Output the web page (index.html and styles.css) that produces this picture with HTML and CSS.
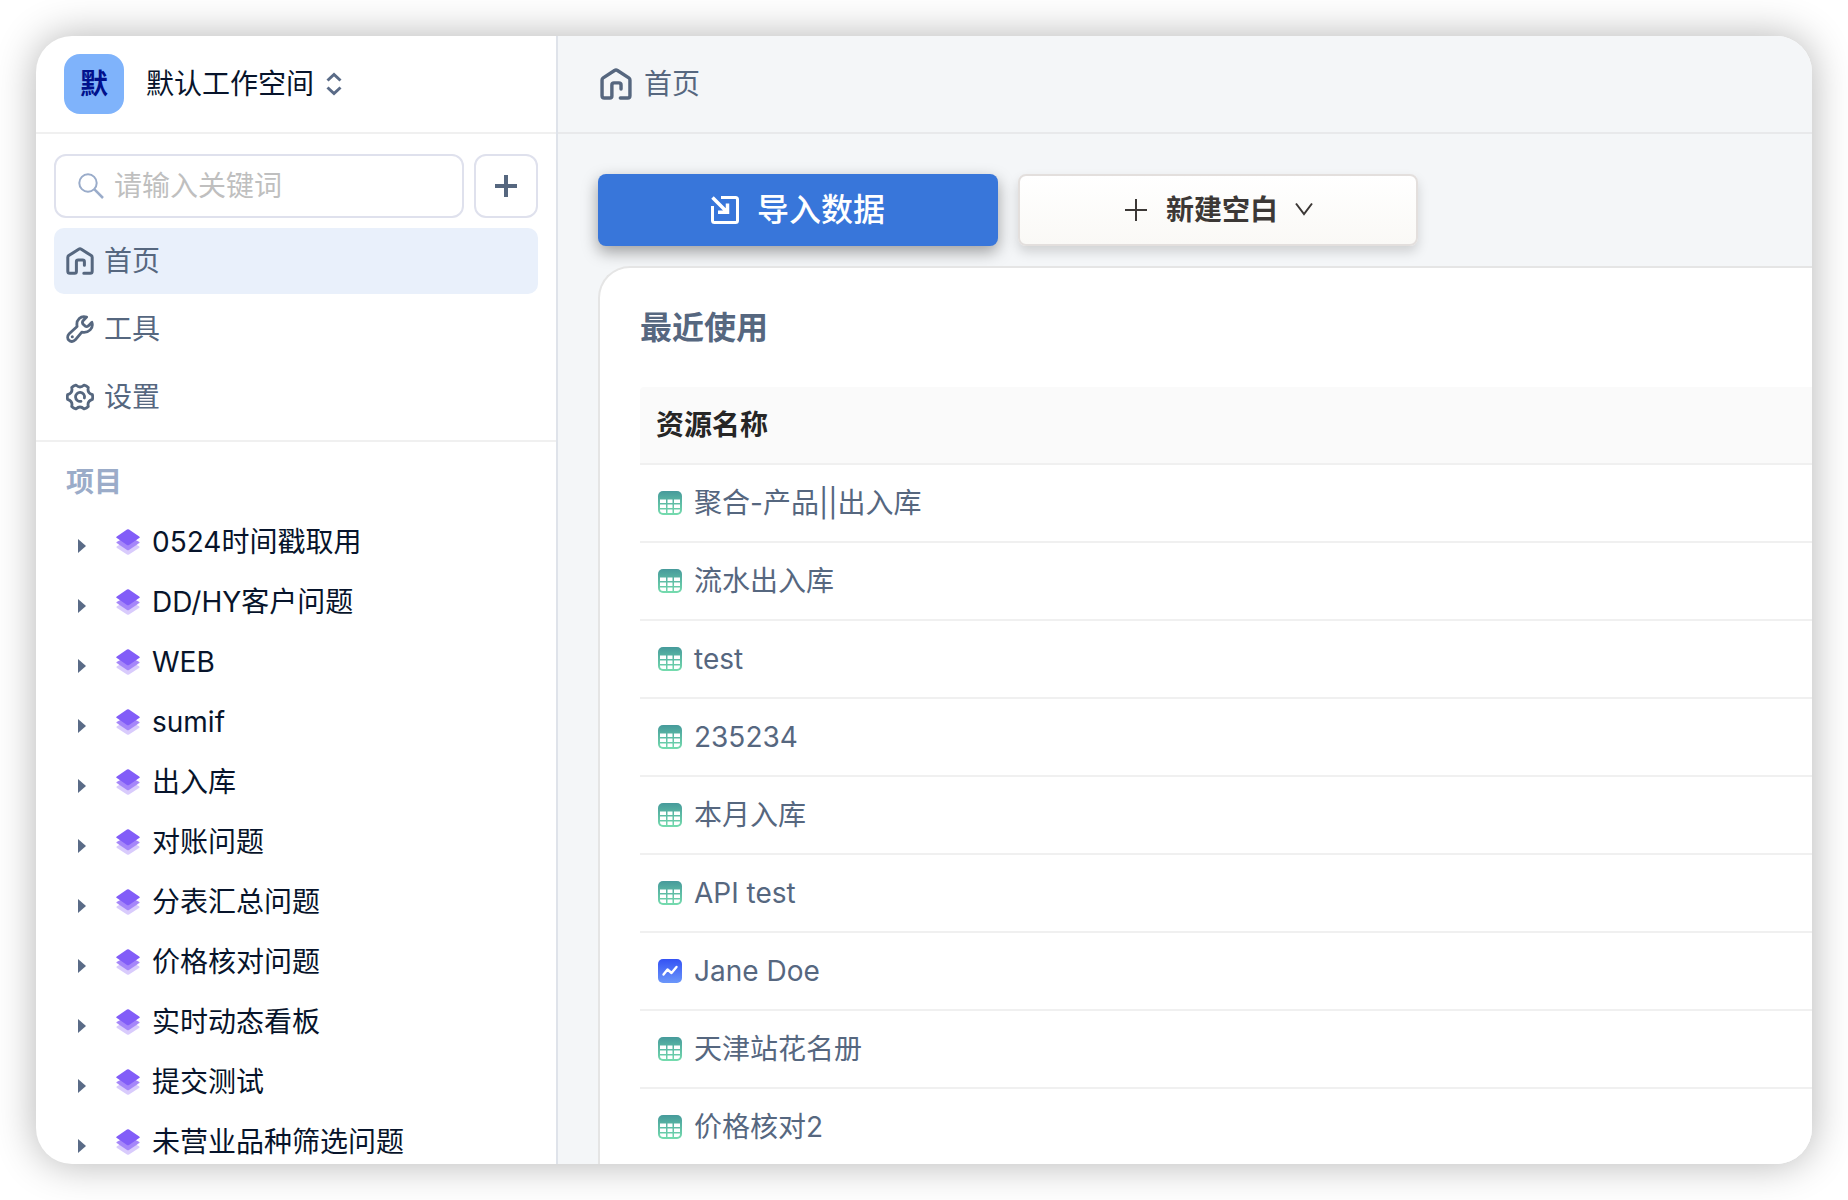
FILE: index.html
```html
<!DOCTYPE html>
<html lang="zh-CN">
<head>
<meta charset="utf-8">
<title>首页</title>
<meta name="viewport" content="width=device-width, initial-scale=1">
<link rel="stylesheet" href="styles.css">
</head>
<body>
<svg class="sprite" aria-hidden="true">
  <defs>
    <linearGradient id="green" x1="0" y1="0" x2="0" y2="1"><stop offset="0" stop-color="#469a9b"/><stop offset="1" stop-color="#75dcae"/></linearGradient>
    <linearGradient id="blue" x1="0" y1="0" x2="0" y2="1"><stop offset="0" stop-color="#3452f4"/><stop offset="1" stop-color="#6b97fa"/></linearGradient>
    <symbol id="home" viewBox="0 0 28 28">
      <path d="M17.8 26.2H24.2Q26.2 26.2 26.2 24.2V10.4Q26.2 9.3 25.2 8.6L15.3 2.2Q14 1.4 12.7 2.2L2.8 8.6Q1.8 9.3 1.8 10.4V24.2Q1.8 26.2 3.8 26.2H8.6Q10.4 26.2 10.4 24.4V14.8Q10.4 13 12.2 13H16.6Q18.4 13 18.4 14.8V18.3" fill="none" stroke="currentColor" stroke-width="3" stroke-linecap="round" stroke-linejoin="round"/>
    </symbol>
    <symbol id="wrench" viewBox="0 0 28 28">
      <path d="M20.6 2.1C15 .2 9.8 4.7 11.1 11.5L3.2 18.8C-1.2 23.6 4.9 29.5 9.3 24.8L15.8 17.1C22.9 18.500 27.7 13 25.9 7.3L22.3 10.9Q20.7 12.1 19.1 11.1L16.9 8.9Q15.9 7.3 17.1 5.7Z" fill="none" stroke="currentColor" stroke-width="2.8" stroke-linejoin="round"/>
      <circle cx="6.300" cy="21.800" r="1.500" fill="currentColor"/>
    </symbol>
    <symbol id="gear" viewBox="0 0 28 28">
      <path d="M26.4 11.6Q27 14 26.4 16.4Q20.9 18.1 22.3 23.500Q20.500 25.300 18.100 25.900Q14 21.900 9.900 25.900Q7.500 25.300 5.700 23.500Q7.100 18.100 1.600 16.400Q1 14 1.600 11.600Q7.100 9.900 5.700 4.500Q7.500 2.700 9.900 2.100Q14 6.100 18.100 2.100Q20.500 2.700 22.300 4.500Q20.900 9.900 26.400 11.600Z" fill="none" stroke="currentColor" stroke-width="2.800" stroke-linejoin="round"/>
      <path d="M15 18.300A4.500 4.500 0 1 1 18.400 15" fill="none" stroke="currentColor" stroke-width="2.800" stroke-linecap="round"/>
    </symbol>
    <symbol id="layers" viewBox="0 0 24 26">
      <path d="M1 17.200L12 11L23 17.200Q24.200 18 23 18.900L13 25.500Q12 26.100 11 25.500L1 18.900Q-.2 18 1 17.200Z" fill="#d9cbfc"/>
      <path d="M1 12.700L12 7L23 12.700Q24.200 13.500 23 14.300L13 20.900Q12 21.500 11 20.900L1 14.300Q-.2 13.500 1 12.700Z" fill="#a586f9"/>
      <path d="M.8 7.500L11 .6Q12 0 13 .6L23.200 7.500Q24.400 8.300 23.200 9.100L13 16Q12 16.600 11 16L.8 9.100Q-.4 8.300 .8 7.500Z" fill="#825df8"/>
    </symbol>
    <symbol id="caret" viewBox="0 0 8 14"><path d="M0 0L8 7L0 14Z" fill="currentColor"/></symbol>
    <symbol id="sheet" viewBox="0 0 24 24">
      <rect width="24" height="24" rx="5" fill="url(#green)"/>
      <path fill="#fff" d="M2 8.500H8V12H2ZM9.500 8.500H14.500V12H9.500ZM16 8.500H22V12H16ZM2 13.500H8V17H2ZM9.500 13.500H14.500V17H9.500ZM16 13.500H22V17H16ZM2 18.500H8V22H5Q2 22 2 19ZM9.500 18.500H14.500V22H9.500ZM16 18.500H22V19Q22 22 19 22H16Z"/>
    </symbol>
    <symbol id="chart" viewBox="0 0 24 24">
      <rect width="24" height="24" rx="5" fill="url(#blue)"/>
      <path d="M5.500 15.500L9.500 10.500L13.500 14L18.500 8" fill="none" stroke="#fff" stroke-width="2.400" stroke-linecap="round" stroke-linejoin="round"/>
    </symbol>
  </defs>
</svg>
<div class="window">
  <aside class="sidebar">
    <header class="bar workspace">
      <span class="avatar">默</span>
      <button class="switcher" type="button">默认工作空间
        <svg width="16" height="24" viewBox="0 0 16 24" fill="none" stroke="#5a6b87" stroke-width="3"><path d="M1.500 8.500L8 2.500L14.500 8.500M1.500 15.500L8 21.500L14.500 15.500"/></svg>
      </button>
    </header>
    <section class="top">
      <div class="search-row">
        <label class="search">
          <svg width="26" height="26" viewBox="0 0 26 26" fill="none" stroke="#9aacca" stroke-width="2"><circle cx="10" cy="10" r="8.700"/><path d="M16.200 16.200L25 25" stroke-width="2.500"/></svg>
          <input type="text" placeholder="请输入关键词" aria-label="请输入关键词">
        </label>
        <button class="add" type="button" aria-label="新建"><svg width="22" height="22" viewBox="0 0 22 22" stroke="currentColor" stroke-width="4"><path d="M11 0V22M0 11H22"/></svg></button>
      </div>
      <nav class="nav">
        <a class="active" href="#home"><svg width="28" height="28"><use href="#home"/></svg>首页</a>
        <a href="#tools"><svg width="28" height="28"><use href="#wrench"/></svg>工具</a>
        <a href="#settings"><svg width="28" height="28"><use href="#gear"/></svg>设置</a>
      </nav>
    </section>
    <section class="projects">
      <h2>项目</h2>
      <ul>
        <li><button type="button" aria-label="展开"><svg width="8" height="14"><use href="#caret"/></svg></button><a href="#p1"><svg width="24" height="26"><use href="#layers"/></svg>0524时间戳取用</a></li>
        <li><button type="button" aria-label="展开"><svg width="8" height="14"><use href="#caret"/></svg></button><a href="#p2"><svg width="24" height="26"><use href="#layers"/></svg>DD/HY客户问题</a></li>
        <li><button type="button" aria-label="展开"><svg width="8" height="14"><use href="#caret"/></svg></button><a href="#p3"><svg width="24" height="26"><use href="#layers"/></svg>WEB</a></li>
        <li><button type="button" aria-label="展开"><svg width="8" height="14"><use href="#caret"/></svg></button><a href="#p4"><svg width="24" height="26"><use href="#layers"/></svg>sumif</a></li>
        <li><button type="button" aria-label="展开"><svg width="8" height="14"><use href="#caret"/></svg></button><a href="#p5"><svg width="24" height="26"><use href="#layers"/></svg>出入库</a></li>
        <li><button type="button" aria-label="展开"><svg width="8" height="14"><use href="#caret"/></svg></button><a href="#p6"><svg width="24" height="26"><use href="#layers"/></svg>对账问题</a></li>
        <li><button type="button" aria-label="展开"><svg width="8" height="14"><use href="#caret"/></svg></button><a href="#p7"><svg width="24" height="26"><use href="#layers"/></svg>分表汇总问题</a></li>
        <li><button type="button" aria-label="展开"><svg width="8" height="14"><use href="#caret"/></svg></button><a href="#p8"><svg width="24" height="26"><use href="#layers"/></svg>价格核对问题</a></li>
        <li><button type="button" aria-label="展开"><svg width="8" height="14"><use href="#caret"/></svg></button><a href="#p9"><svg width="24" height="26"><use href="#layers"/></svg>实时动态看板</a></li>
        <li><button type="button" aria-label="展开"><svg width="8" height="14"><use href="#caret"/></svg></button><a href="#p10"><svg width="24" height="26"><use href="#layers"/></svg>提交测试</a></li>
        <li><button type="button" aria-label="展开"><svg width="8" height="14"><use href="#caret"/></svg></button><a href="#p11"><svg width="24" height="26"><use href="#layers"/></svg>未营业品种筛选问题</a></li>
      </ul>
    </section>
  </aside>
  <main class="main">
    <header class="bar crumb"><svg width="32" height="32"><use href="#home"/></svg>首页</header>
    <div class="content">
      <div class="actions">
        <button class="primary" type="button">
          <svg width="28" height="28" viewBox="0 0 28 28" fill="none" stroke="currentColor" stroke-width="3"><path d="M10 1.500H24.500Q26.500 1.500 26.500 3.500V24.500Q26.500 26.500 24.500 26.500H3.500Q1.500 26.500 1.500 24.500V10"/><path d="M1.500 1.500L16 16M7 16.300H16.500V7.500" stroke-width="3.500"/></svg>
          导入数据
        </button>
        <button class="secondary" type="button">
          <svg width="28" height="28" viewBox="0 0 28 28" stroke="currentColor" stroke-width="2"><path d="M14 3V25M3 14H25"/></svg>
          新建空白
          <svg width="20" height="20" viewBox="0 0 20 20" fill="none" stroke="currentColor" stroke-width="2"><path d="M2 3.500L10 14L18 3.500"/></svg>
        </button>
      </div>
      <section class="card">
        <h1>最近使用</h1>
        <table>
          <thead><tr><th scope="col">资源名称</th></tr></thead>
          <tbody>
            <tr><td><a href="#r1"><svg width="24" height="24"><use href="#sheet"/></svg>聚合-产品||出入库</a></td></tr>
            <tr><td><a href="#r2"><svg width="24" height="24"><use href="#sheet"/></svg>流水出入库</a></td></tr>
            <tr><td><a href="#r3"><svg width="24" height="24"><use href="#sheet"/></svg>test</a></td></tr>
            <tr><td><a href="#r4"><svg width="24" height="24"><use href="#sheet"/></svg>235234</a></td></tr>
            <tr><td><a href="#r5"><svg width="24" height="24"><use href="#sheet"/></svg>本月入库</a></td></tr>
            <tr><td><a href="#r6"><svg width="24" height="24"><use href="#sheet"/></svg>API test</a></td></tr>
            <tr><td><a href="#r7"><svg width="24" height="24"><use href="#chart"/></svg>Jane Doe</a></td></tr>
            <tr><td><a href="#r8"><svg width="24" height="24"><use href="#sheet"/></svg>天津站花名册</a></td></tr>
            <tr><td><a href="#r9"><svg width="24" height="24"><use href="#sheet"/></svg>价格核对2</a></td></tr>
          </tbody>
        </table>
      </section>
    </div>
  </main>
</div>
</body>
</html>
```

FILE: styles.css
```css
* { box-sizing: border-box; }

body {
  margin: 0;
  padding: 36px;
  height: 100vh;
  background: #fff;
  color: #56677f;
  font: 28px/44px Inter, "Noto Sans CJK SC", sans-serif;
}

a { color: inherit; text-decoration: none; }

button {
  font: inherit;
  color: inherit;
  background: none;
  border: 0;
  padding: 0;
  cursor: pointer;
}

svg { display: block; flex: none; }
.sprite { position: absolute; width: 0; height: 0; }

.window {
  display: flex;
  height: 100%;
  border-radius: 36px;
  overflow: hidden;
  background: #fff;
  box-shadow: 0 0 40px rgba(0, 0, 0, .3);
}

/* Sidebar */
.sidebar {
  flex: none;
  width: 522px;
  border-right: 2px solid #dfe3ea;
  overflow: hidden;
}

.bar {
  display: flex;
  align-items: center;
  height: 98px;
  border-bottom: 2px solid #f0f0f0;
}

.workspace { gap: 22px; padding: 0 28px; }

.avatar {
  width: 60px;
  height: 60px;
  border-radius: 16px;
  background: #7fb3fb;
  color: #00108c;
  font-weight: 700;
  line-height: 60px;
  text-align: center;
}

.switcher {
  display: flex;
  align-items: center;
  gap: 12px;
  color: #07142b;
}

.top {
  padding: 20px 18px 10px;
  border-bottom: 2px solid #f0f0f0;
}

.search-row { display: flex; gap: 10px; margin-bottom: 10px; }

.search,
.add {
  display: flex;
  align-items: center;
  height: 64px;
  border: 2px solid #dfe1ed;
  border-radius: 12px;
}

.search { flex: 1; gap: 8px; padding: 0 24px 0 22px; min-width: 0; }

.search input {
  flex: 1;
  min-width: 0;
  height: 44px;
  padding: 0 2px;
  border: 0;
  outline: 0;
  background: none;
  font: inherit;
  color: #07142b;
}

.search input::placeholder { color: #bfbfbf; opacity: 1; }

.add { width: 64px; justify-content: center; }

.nav { display: grid; gap: 2px; }

.nav a {
  display: flex;
  align-items: center;
  gap: 10px;
  height: 66px;
  padding: 0 12px;
  border-radius: 10px;
}

.nav .active { background: #e9f0fb; }

.projects h2 {
  margin: 0;
  padding: 18px 30px 8px;
  font-size: 28px;
  font-weight: 700;
  color: #9bacc9;
}

.projects ul { margin: 0; padding: 0; list-style: none; }

.projects li { display: flex; height: 60px; color: #07142b; }

.projects button {
  display: flex;
  align-items: center;
  justify-content: center;
  width: 20px;
  margin: 8px 18px 0 36px;
  color: #5a6b87;
}

.projects li a { display: flex; align-items: center; flex: 1; gap: 12px; padding-left: 6px; }

/* Main area */
.main {
  flex: 1;
  min-width: 0;
  display: flex;
  flex-direction: column;
  background: #f4f6f8;
}

.crumb {
  flex: none;
  gap: 12px;
  padding: 0 42px;
  border-color: #e8e9eb;
}

.content {
  flex: 1;
  display: flex;
  flex-direction: column;
  gap: 20px;
  min-height: 0;
  padding: 40px 0 0 40px;
}

.actions { display: flex; gap: 20px; }

.actions button {
  display: flex;
  align-items: center;
  justify-content: center;
  gap: 16px;
  width: 400px;
  height: 72px;
  border-radius: 8px;
}

.actions .primary {
  gap: 18px;
  background: #3876da;
  color: #fff;
  font-size: 32px;
  font-weight: 500;
  box-shadow: 0 6px 16px rgba(0, 0, 0, .36);
}

.actions .secondary {
  border: 2px solid #e3dfdd;
  background: linear-gradient(#fff, #faf9f6);
  color: #3c3836;
  font-weight: 700;
  box-shadow: 0 6px 12px rgba(0, 0, 0, .15);
}

.card {
  flex: 1;
  padding: 38px 0 0 40px;
  border: solid #e5e5e5;
  border-width: 2px 0 0 2px;
  border-radius: 32px 0 0 0;
  background: #fff;
}

.card h1 {
  margin: 0 0 37px;
  font-size: 32px;
  font-weight: 700;
}

table { width: 100%; border-collapse: separate; border-spacing: 0; }

th,
td {
  height: 78px;
  padding: 0 16px;
  border-bottom: 2px solid #f0f0f0;
  text-align: left;
}

th {
  border-top-left-radius: 4px;
  background: #fafafa;
  color: #262626;
  font-weight: 700;
}

td { padding-left: 18px; }
td a { display: flex; align-items: center; gap: 12px; }
```
